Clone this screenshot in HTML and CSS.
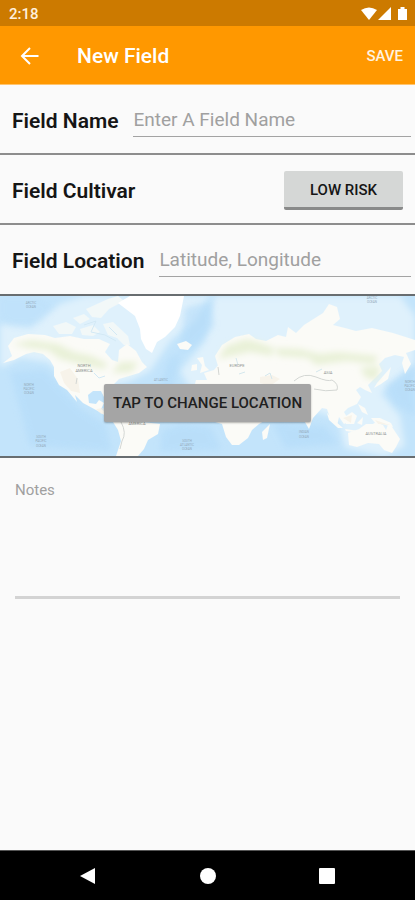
FILE: index.html
```html
<!DOCTYPE html>
<html lang="en">
<head>
    <meta charset="UTF-8">
    <meta name="viewport" content="width=device-width, initial-scale=1.0">
    <title>New Field</title>
    <link rel="stylesheet" href="styles.css">
</head>

<body>

    <div class="status-bar">
        <span>2:18</span>
        <svg class="status-icons" width="48" height="16" viewBox="0 0 48 16" aria-hidden="true">
            <path d="M0 4 Q8 -1 16 4 L8 14 Z"/>
            <path d="M30 1 V14 H17 Z"/>
            <path d="M37 3 H39.500 V1 H43.500 V3 H46 V14 H37 Z"/>
        </svg>
    </div>

    <header class="app-bar">
        <button class="back-btn" type="button" aria-label="Back">
            <svg width="20" height="20" viewBox="0 0 20 20">
                <path d="M18.500 10 H2.500 M10 2 L2 10 L10 18"/>
            </svg>
        </button>
        <h1 class="title">New Field</h1>
        <button class="save-btn" type="submit" form="field-form">SAVE</button>
    </header>

    <form class="field-form" id="field-form">
        <div class="row">
            <label for="field-name">Field Name</label>
            <input type="text" id="field-name" placeholder="Enter A Field Name">
        </div>
        <div class="row cultivar-row">
            <label for="cultivar">Field Cultivar</label>
            <button class="risk-btn" type="button" id="cultivar">LOW RISK</button>
        </div>
        <div class="row location-row">
            <label for="field-location">Field Location</label>
            <input type="text" id="field-location" placeholder="Latitude, Longitude">
        </div>

        <div class="map">
            <svg class="map-art" viewBox="0 0 415 160" preserveAspectRatio="xMidYMid slice" aria-hidden="true">
                <defs>
                    <filter id="soft" x="-20%" y="-20%" width="140%" height="140%">
                        <feGaussianBlur stdDeviation="3"/>
                    </filter>
                    <filter id="edge">
                        <feGaussianBlur stdDeviation="0.6"/>
                    </filter>
                </defs>
                <rect width="415" height="160" fill="#c3e4fb"/>
                <!-- shallow water -->
                <g fill="#dff1fc" filter="url(#soft)">
                    <path d="M0 28 L30 32 L60 8 L85 0 H210 L195 25 L170 45 L160 60 L150 75 L130 85 L112 90 L75 92 L48 66 L20 62 L0 72 Z"/>
                    <path d="M215 0 H400 L415 20 V66 L398 82 L380 98 L350 118 L330 120 L300 110 L190 92 L180 75 L205 45 Z"/>
                    <path d="M320 95 L375 90 L400 120 L405 150 L385 160 L345 152 L340 130 Z"/>
                </g>
                <!-- deep water -->
                <g fill="#b3dbf9" filter="url(#soft)" opacity="0.600">
                    <path d="M10 76 L45 74 L80 112 L105 128 L112 155 L30 150 Z"/>
                    <path d="M185 12 L210 5 L214 30 L195 50 L170 62 L158 92 L172 96 L180 60 Z"/>
                    <path d="M385 90 L415 70 V120 L395 108 Z"/>
                    <path d="M162 135 L180 128 L210 130 L222 154 L160 156 Z"/>
                    <path d="M272 126 L325 130 L338 148 L285 152 Z"/>
                    <path d="M0 22 L12 30 L40 28 L55 10 L35 0 H0 Z" opacity="0.300"/>
                </g>
                <!-- arctic islands -->
                <g fill="#f2f8f8" filter="url(#edge)">
                    <path d="M53 30 L66 26 L76 31 L72 38 L59 38 Z M73 22 L84 18 L90 23 L80 28 Z M80 33 L93 29 L100 36 L93 40 L82 39 Z M86 13 L108 3 L118 0 L124 5 L109 13 L101 22 L92 21 Z M103 28 L113 26 L128 40 L130 49 L124 49 L117 42 L108 39 Z"/>
                </g>
                <!-- land -->
                <g fill="#fbfbf7" filter="url(#edge)">
                    <path d="M8 50 L14 42 L28 38 L45 39 L55 42 L70 40 L84 43 L99 43 L110 48 L105 56 L112 64 L118 66 L119 54 L127 48 L136 55 L142 66 L147 71 L139 77 L129 80 L119 83 L113 89 L106 94 L109 103 L104 101 L101 95 L93 95 L88 99 L89 107 L96 108 L99 104 L104 107 L101 113 L108 118 L118 119 L132 119 L142 126 L160 128 L158 138 L148 144 L144 153 L138 160 H116 L121 145 L118 134 L113 126 L106 120 L96 114 L83 107 L75 99 L77 106 L67 94 L59 89 L54 80 L54 71 L50 64 L43 58 L34 56 L26 58 L14 64 L3 67 L12 60 Z"/>
                    <path d="M118 7 L130 0 H184 L180 20 L175 31 L165 41 L157 46 L152 57 L146 53 L141 43 L140 33 L135 20 Z" fill="#ffffff"/>
                    <path d="M177 48 L186 45 L192 49 L188 54 L180 53 Z"/>
                    <path d="M197 62 L203 61 L205 70 L209 74 L200 77 L202 69 Z M192 69 L197 68 L197 74 L191 75 Z"/>
                    <path d="M215 60 L222 49 L235 41 L249 38 L256 43 L266 45 L278 39 L286 41 L288 31 L296 37 L304 29 L323 17 L329 8 L337 11 L340 23 L333 29 L345 32 L356 35 L372 32 L393 37 L415 44 V54 L406 57 L411 68 L405 78 L402 67 L404 61 L395 59 L385 62 L379 68 L382 75 L373 84 L368 89 L372 97 L365 94 L360 91 L356 94 L361 101 L357 108 L348 112 L344 116 L349 125 L344 128 L339 121 L337 130 L330 122 L327 113 L322 112 L313 122 L309 133 L302 121 L297 114 L283 112 L277 117 L262 124 L256 113 L248 101 L238 97 L226 97 L221 91 L211 88 L204 94 L194 92 L196 84 L207 84 L204 77 L214 74 L220 67 L228 68 L228 60 L236 54 L235 65 L229 68 L218 70 Z"/>
                    <path d="M189 99 L204 93 L229 99 L252 101 L264 125 L259 128 L252 134 L248 142 L239 149 L232 149 L226 141 L222 128 L205 123 L190 114 Z"/>
                    <path d="M262 136 L270 128 L267 142 L263 144 Z M384 79 L391 71 L388 83 L381 88 L374 92 L377 87 Z"/>
                    <path d="M327 117 L334 124 L343 132 L338 132 L329 124 Z M343 122 L352 116 L357 120 L354 128 L346 128 Z M357 127 L363 121 L362 129 Z M371 122 L380 122 L391 127 L393 131 L382 128 L376 128 Z M358 108 L365 112 L368 119 L362 116 Z M345 133 L359 135 L360 137 L346 135 Z"/>
                    <path d="M348 137 L359 133 L366 128 L373 128 L376 126 L383 129 L386 134 L389 126 L394 134 L400 143 L396 151 L392 157 L384 154 L379 148 L368 147 L357 151 L349 149 Z"/>
                </g>
                <!-- vegetation -->
                <g fill="#e9f1d8" filter="url(#soft)">
                    <path d="M12 48 L32 44 L58 48 L74 56 L92 60 L108 68 L104 73 L80 68 L60 63 L48 54 L30 52 Z"/>
                    <path d="M120 66 L138 66 L132 76 L112 77 Z"/>
                    <path d="M218 63 L226 50 L246 43 L258 46 L274 52 L272 60 L250 56 L232 60 Z"/>
                    <path d="M275 52 L300 53 L320 58 L338 56 L378 60 L374 68 L347 65 L316 69 L308 62 L278 60 Z"/>
                    <path d="M360 72 L380 70 L377 84 L366 82 Z"/>
                </g>
                <g fill="#f6efe2" filter="url(#edge)" opacity="0.600">
                    <path d="M60 76 L70 72 L78 83 L80 97 L71 95 L64 87 Z"/>
                    <path d="M260 81 L272 79 L280 83 L270 90 L260 87 Z M343 122 L352 119 L351 127 Z M375 124 L390 129 L378 128 Z"/>
                    <path d="M96 113 L103 112 L109 117 L101 118 Z"/>
                </g>
                <!-- mountain ranges and lakes -->
                <g fill="none" stroke="#d3d6d3" stroke-width="1" filter="url(#edge)">
                    <path d="M294 85 Q304 76 316 81 T332 84 Q339 88 337 94 Q326 96 314 93"/>
                    <path d="M121 126 Q127 137 122 145 L120 153"/>
                    <path d="M218 71 L219 79 M77 82 L76 88"/>
                    <path d="M94 77 L99 82 L105 80 M84 29 L96 25 L91 36 L105 39 L116 45 M109 31 L117 39" stroke="#d3e9f5"/>
                    <path d="M265 80 L270 77 L272 83 M239 78 L245 76 M236 62 L238 69 M316 76 L322 73" stroke="#d4e7ed"/>
                </g>
                <!-- map labels -->
                <g class="map-labels">
                    <text x="31" y="8">ARCTIC</text>
                    <text x="31" y="12">OCEAN</text>
                    <text class="land-label" x="84" y="71">NORTH</text>
                    <text class="land-label" x="84" y="76">AMERICA</text>
                    <text x="29" y="90">NORTH</text>
                    <text x="29" y="94">PACIFIC</text>
                    <text x="29" y="98">OCEAN</text>
                    <text x="41" y="142">SOUTH</text>
                    <text x="41" y="146">PACIFIC</text>
                    <text x="41" y="151">OCEAN</text>
                    <text x="161" y="85">ATLANTIC</text>
                    <text class="land-label" x="137" y="129">AMERICA</text>
                    <text class="land-label" x="237" y="71">EUROPE</text>
                    <text class="land-label" x="328" y="78">ASIA</text>
                    <text x="372" y="3">ARCTIC</text>
                    <text x="372" y="7">OCEAN</text>
                    <text x="187" y="146">SOUTH</text>
                    <text x="187" y="150">ATLANTIC</text>
                    <text x="187" y="154">OCEAN</text>
                    <text x="304" y="137">INDIAN</text>
                    <text x="304" y="142">OCEAN</text>
                    <text class="land-label" x="376" y="139">AUSTRALIA</text>
                    <text x="410" y="87">NORTH</text>
                    <text x="410" y="91">PACIFIC</text>
                    <text x="410" y="95">OCEAN</text>
                </g>
            </svg>
            <button class="location-btn" type="button">TAP TO CHANGE LOCATION</button>
        </div>

        <div class="notes">
            <textarea id="notes" placeholder="Notes" aria-label="Notes"></textarea>
        </div>
    </form>

    <nav class="nav-bar">
        <button type="button" aria-label="Back">
            <svg width="20" height="20" viewBox="0 0 20 20"><path d="M17 2 V18 L2 10 Z"/></svg>
        </button>
        <button type="button" aria-label="Home">
            <svg width="20" height="20" viewBox="0 0 20 20"><circle cx="10" cy="10" r="8"/></svg>
        </button>
        <button type="button" aria-label="Recent apps">
            <svg width="20" height="20" viewBox="0 0 20 20"><rect x="2" y="2" width="16" height="16" rx="1"/></svg>
        </button>
    </nav>

</body>

</html>
```
FILE: styles.css
```css
* {
    box-sizing: border-box;
}

body {
    margin: 0;
    min-height: 100vh;
    display: flex;
    flex-direction: column;
    font-family: Roboto, "Liberation Sans", sans-serif;
    background-color: #fafafa;
    color: #151515;
}

button {
    font-family: inherit;
    border: none;
    padding: 0;
    cursor: pointer;
}

.status-bar {
    display: flex;
    justify-content: space-between;
    align-items: center;
    height: 26px;
    padding: 2px 6px 0 9px;
    background-color: #cc7a00;
    color: #fff0dc;
    font-size: 15px;
    font-weight: 500;
}

.status-icons {
    fill: white;
}

.app-bar {
    display: flex;
    align-items: center;
    height: 59px;
    padding: 2px 12px 0 20px;
    background-color: #ff9800;
    border-bottom: 1px solid #ffc46e;
    color: white;
}

.back-btn {
    display: flex;
    background: none;
}

.back-btn svg {
    fill: none;
    stroke: white;
    stroke-width: 2;
}

.title {
    flex: 1;
    margin: 0 0 0 37px;
    font-size: 21px;
    font-weight: 500;
}

.save-btn {
    background: none;
    color: #fff3e0;
    font-size: 15px;
    font-weight: 500;
}

.field-form {
    flex: 1;
}

.row {
    display: flex;
    align-items: center;
    gap: 15px;
    height: 70px;
    padding: 3px 4px 0 12px;
    border-bottom: 2px solid #8d8d8d;
}

.row label {
    font-size: 21px;
    font-weight: 600;
}

.row input {
    flex: 1;
    min-width: 0;
    height: 32px;
    padding: 0 0 2px;
    border: none;
    border-bottom: 1px solid #a3a3a3;
    outline: none;
    background: none;
    font-family: inherit;
    font-size: 19px;
}

.row input::placeholder,
.notes textarea::placeholder {
    color: #a0a0a0;
}

.cultivar-row {
    justify-content: space-between;
    padding-right: 12px;
}

.location-row {
    height: 71px;
    border-bottom-color: #686d70;
}

.risk-btn {
    width: 119px;
    height: 39px;
    padding-top: 2px;
    border-bottom: 3px solid #898a8a;
    border-radius: 2px;
    background-color: #d5d7d6;
    color: #151515;
    font-size: 15px;
    font-weight: 500;
}

.map {
    position: relative;
    display: flex;
    justify-content: center;
    height: 162px;
    border-bottom: 2px solid #686d70;
    overflow: hidden;
}

.map-art {
    width: 100%;
    height: 100%;
}

.map-labels text {
    fill: #93a9b8;
    font-size: 3px;
    text-anchor: middle;
}

.map-labels .land-label {
    fill: #8d918f;
    font-size: 4px;
}

/* Sits on top of the map */
.location-btn {
    position: absolute;
    top: 88px;
    height: 38px;
    padding: 0 9px;
    border-radius: 2px;
    background-color: #a5a5a5;
    box-shadow: 0 1px 2px rgba(0, 0, 0, 0.3);
    color: #202020;
    font-size: 15px;
    font-weight: 500;
    white-space: nowrap;
}

.notes {
    padding: 23px 15px 0;
}

.notes textarea {
    display: block;
    width: 100%;
    height: 118px;
    padding: 0;
    border: none;
    border-bottom: 3px solid #d3d3d3;
    outline: none;
    resize: none;
    background: none;
    font-family: inherit;
    font-size: 15px;
}

.nav-bar {
    display: flex;
    justify-content: space-between;
    align-items: center;
    height: 50px;
    padding: 0 78px;
    background-color: black;
    border-top: 1px solid #555555;
}

.nav-bar button {
    display: flex;
    background: none;
}

.nav-bar svg {
    fill: white;
}
```
